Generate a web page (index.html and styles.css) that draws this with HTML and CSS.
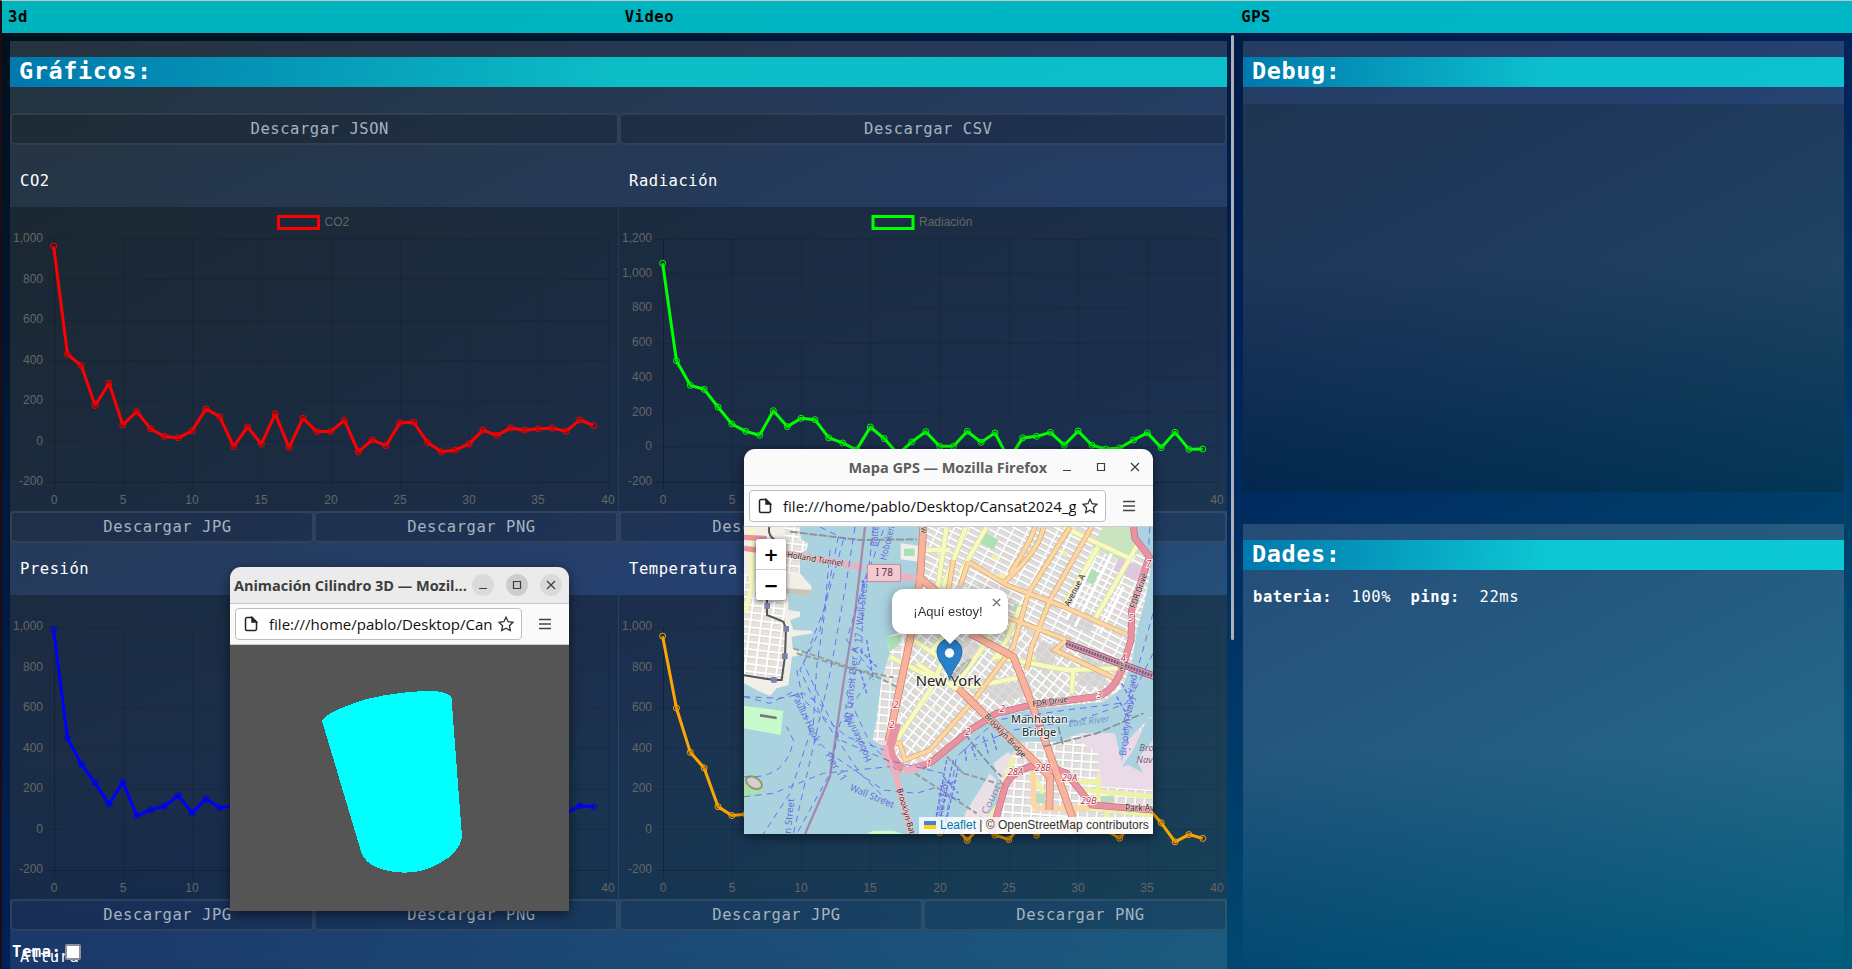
FILE: index.html
```html
<!DOCTYPE html>
<html lang="es">
<head>
<meta charset="utf-8">
<title>Cansat 2024</title>
<link rel="stylesheet" href="styles.css">
</head>
<body>
<div class="app">
  <nav class="nav"><b>3d</b><b>Video</b><b>GPS</b></nav>
  <div class="columns">
    <div class="graphs-scroll">
      <section class="panel graphs">
        <h2 class="bar">Gráficos:</h2>
        <div class="buttons export"><button>Descargar JSON</button><button>Descargar CSV</button></div>
        <div class="charts">
          <article><h3>CO2</h3><svg class="chart" id="co2"></svg><div class="buttons"><button>Descargar JPG</button><button>Descargar PNG</button></div></article>
          <article><h3>Radiación</h3><svg class="chart" id="rad"></svg><div class="buttons"><button>Descargar JPG</button><button>Descargar PNG</button></div></article>
          <article><h3>Presión</h3><svg class="chart" id="pre"></svg><div class="buttons"><button>Descargar JPG</button><button>Descargar PNG</button></div></article>
          <article><h3>Temperatura</h3><svg class="chart" id="tem"></svg><div class="buttons"><button>Descargar JPG</button><button>Descargar PNG</button></div></article>
          <article><h3>Altura</h3></article>
        </div>
      </section>
      <div class="thumb"></div>
    </div>
    <div class="side">
      <section class="panel fade"><h2 class="bar">Debug:</h2><div class="log"></div></section>
      <section class="panel fade"><h2 class="bar">Dades:</h2><p class="stats"><b>bateria:</b><span>100%</span><b>ping:</b><span>22ms</span></p></section>
    </div>
  </div>
  <label class="theme"><b>Tema:</b><i class="check"></i></label>
</div>

<div class="window cylinder">
  <header class="titlebar">
    <span class="wtitle">Animación Cilindro 3D — Mozil...</span>
    <svg class="wbtn" viewBox="0 0 22 22"><circle cx="11" cy="11" r="11"/><path d="M7 14.5h8"/></svg>
    <svg class="wbtn dark" viewBox="0 0 22 22"><circle cx="11" cy="11" r="11"/><path d="M7.5 7.5h7v7h-7z"/></svg>
    <svg class="wbtn" viewBox="0 0 22 22"><circle cx="11" cy="11" r="11"/><path d="M7 7l8 8M15 7l-8 8"/></svg>
  </header>
  <div class="toolbar">
    <div class="url">
      <svg class="doc" viewBox="0 0 14 16"><path d="M1.5 3a1.5 1.5 0 0 1 1.500-1.500H8L12.500 6v7a1.500 1.500 0 0 1-1.500 1.500H3A1.500 1.500 0 0 1 1.500 13z"/><path class="fold" d="M8 1.500V6h4.500z"/></svg>
      <span>file:///home/pablo/Desktop/Cansat2024_graph</span>
      <svg class="star" viewBox="0 0 16 16"><path d="M8 1.200l2.100 4.500 4.900.6-3.600 3.400.9 4.900L8 12.200l-4.300 2.400.9-4.900L1 6.300l4.900-.6z"/></svg>
    </div>
    <svg class="menu" viewBox="0 0 12 12"><path d="M0 1.500h12M0 6h12M0 10.500h12"/></svg>
  </div>
  <svg class="scene" viewBox="230 645 339 266" shape-rendering="crispEdges"><path d="M322 721C326 713 345 706 367 699C390 693 415 691 432 691Q450 692 451.500 698L462 837C461 846 452 857 440 863C425 872 410 873 402 872.500C385 872 366 866 361.500 853Z" fill="#0ff"/></svg>
</div>

<div class="window map">
  <header class="titlebar">
    <span class="wtitle">Mapa GPS — Mozilla Firefox</span>
    <svg class="wbtn" viewBox="0 0 22 22"><path d="M7 14.500h8"/></svg>
    <svg class="wbtn" viewBox="0 0 22 22"><path d="M7.500 7.500h7v7h-7z"/></svg>
    <svg class="wbtn" viewBox="0 0 22 22"><path d="M7 7l8 8M15 7l-8 8"/></svg>
  </header>
  <div class="toolbar">
    <div class="url">
      <svg class="doc" viewBox="0 0 14 16"><path d="M1.500 3a1.500 1.500 0 0 1 1.500-1.500H8L12.500 6v7a1.500 1.500 0 0 1-1.500 1.500H3A1.500 1.500 0 0 1 1.500 13z"/><path class="fold" d="M8 1.500V6h4.500z"/></svg>
      <span>file:///home/pablo/Desktop/Cansat2024_graph</span>
      <svg class="star" viewBox="0 0 16 16"><path d="M8 1.200l2.100 4.500 4.900.6-3.600 3.400.9 4.900L8 12.200l-4.300 2.400.9-4.900L1 6.300l4.900-.6z"/></svg>
    </div>
    <svg class="menu" viewBox="0 0 12 12"><path d="M0 1.500h12M0 6h12M0 10.500h12"/></svg>
  </div>
  <div class="mapview">
    <svg class="tiles" viewBox="42 261 1227 921" preserveAspectRatio="none">
      <defs>
        <pattern id="gridA" width="40" height="19" patternUnits="userSpaceOnUse" patternTransform="rotate(27)"><rect width="40" height="19" fill="#dedddb"/><path d="M0 0H40M0 0V19" stroke="#cbc9c7" stroke-width="9"/><path d="M0 0H40M0 0V19M0 19H40M40 0V19" stroke="#fff" stroke-width="5"/></pattern>
        <pattern id="gridB" width="22" height="27" patternUnits="userSpaceOnUse" patternTransform="rotate(-52)"><rect width="22" height="27" fill="#dcdad6"/><path d="M0 0H22M0 0V27" stroke="#cbc9c7" stroke-width="8"/><path d="M0 0H22M0 0V27M0 27H22M22 0V27" stroke="#fff" stroke-width="5"/></pattern>
        <pattern id="gridC" width="32" height="22" patternUnits="userSpaceOnUse" patternTransform="rotate(7)"><rect width="32" height="22" fill="#e6e2dc"/><path d="M0 0H32M0 0V22" stroke="#c8c6c4" stroke-width="8"/><path d="M0 0H32M0 0V22M0 22H32M32 0V22" stroke="#fff" stroke-width="6"/></pattern>
        <pattern id="gridD" width="28" height="24" patternUnits="userSpaceOnUse" patternTransform="rotate(4)"><rect width="28" height="24" fill="#dfdedc"/><path d="M0 0H28M0 0V24" stroke="#c8c6c4" stroke-width="8"/><path d="M0 0H28M0 0V24M0 24H28M28 0V24" stroke="#fff" stroke-width="5"/></pattern>
        <clipPath id="manhattan"><path id="mshape" d="M582 261L572 330 562 440 545 560 470 592 480 640 455 720 440 840 428 900 465 920 480 965 515 995 545 995 610 972 660 930 745 862 830 822 930 805 1050 792 1120 785 1175 745 1205 670 1220 570 1245 480 1262 390 1245 330 1215 295 1205 261Z"/></clipPath>
        <clipPath id="brooklyn"><path d="M735 1182L800 1090 825 970 870 905 985 905 1050 880 1155 880 1175 970 1195 900 1262 830 1269 840V1182Z"/></clipPath>
      </defs>
      <rect x="42" y="261" width="1227" height="921" fill="#aad3df"/>
      <!-- New Jersey -->
      <path d="M42 261H205L215 300 235 310 230 330 210 340V400L245 440 240 465 175 460V510L210 515V530L180 540 190 570 245 572 248 580 185 590 188 625 215 635 212 645 186 650 175 735 140 745 120 768 90 755 42 730Z" fill="#f2efe9"/>
      <path d="M42 400L165 480 165 715 120 725 42 705Z" fill="url(#gridC)"/>
      <path d="M165 261H210L205 300 235 310 210 345 208 400 165 400Z" fill="url(#gridC)"/>
      <path d="M170 445L245 450 240 467 168 460Z" fill="#c9c4b8"/>
      <path d="M42 798L160 812 152 885 42 865Z" fill="#c8facc"/><path d="M90 826L140 834" stroke="#777" stroke-width="8"/>
      <path d="M42 1010L65 995 105 1030 90 1065 65 1060 42 1090Z" fill="#a8e0a8"/><ellipse cx="72" cy="1028" rx="26" ry="16" transform="rotate(30 72 1028)" fill="#d5d0ca" stroke="#8d9488" stroke-width="6"/>
      <path d="M410 1182L430 1172H490L520 1182Z" fill="#c8facc"/>
      <path d="M65 261V440L45 520" fill="none" stroke="#f6f8b8" stroke-width="14"/><path d="M42 292L110 296M42 325L80 330" stroke="#e892a2" stroke-width="16"/>
      <path d="M118 261Q112 285 135 300M111 470V525L160 545 168 567 165 648 155 720 132 720 42 706" fill="none" stroke="#555" stroke-width="6"/>
      <path d="M103 489h17v17h-17zM160 558h17v17h-17zM156 640h17v17h-17zM123 711h17v17h-17z" fill="#7881b0"/>
      <!-- Manhattan -->
      <use href="#mshape" fill="#f2efe9"/>
      <path d="M512 310L570 318 565 365 512 358Z" fill="#f2efe9"/><path d="M522 326h32v22h-32z" fill="#a9e0b8"/>
      <g clip-path="url(#manhattan)">
        <path d="M585 261H1269V700L1180 780 860 700 560 600Z" fill="url(#gridA)"/>
        <path d="M545 570L860 560 1180 690 1160 790 780 830 540 1000 490 960 520 740Z" fill="url(#gridB)"/>
        <path d="M440 620L540 590 495 930 430 900Z" fill="url(#gridD)"/>
        <path d="M1120 261H1240L1225 340 1185 370 1085 320Z" fill="#c9e4c0"/><path d="M1165 355L1235 380 1225 425 1150 390Z" fill="#ddc9dd"/>
        <path d="M760 275L805 300 790 330 745 305ZM1080 385L1105 400 1090 435 1062 418ZM855 490l25 12-8 20-25-12zM465 592l50-8-8 30-40 30z" fill="#aee0b6"/>
        <path d="M930 600L985 620 960 700 900 680ZM1055 640L1140 680 1120 745 1040 735ZM1030 500L1100 530 1080 580 1010 550ZM760 740L900 720 905 765 800 790ZM690 600L760 620 740 670 690 660Z" fill="#d3cfd0" opacity=".75"/>
        <path d="M790 340l18 8-7 14-18-8zM810 395l25 12-8 20-25-12zM1000 330l15 7-6 13-15-7zM905 640l15 8-6 14-15-8zM760 470h14v12h-14zM605 800h12v10h-12z" fill="#f0efb0"/>
        <path d="M1145 340L1035 560M1105 330L1010 540M1180 440L1110 580" fill="none" stroke="#fff" stroke-width="9"/>
        <g id="yellow"><path d="M650 261L622 450M708 261L640 440M770 261L690 400M1000 261L1205 358M1225 310L1090 545M1105 320L1000 500M575 330H660M870 500L830 600 790 660M800 650L1010 690 1165 685M480 650L620 720 730 740 880 710M550 600L640 660 600 750 500 900M640 590L600 640M780 590L690 720M1030 690L1025 760M560 670L700 760" fill="none" stroke="#d6d896" stroke-width="17"/>
        <path d="M650 261L622 450M708 261L640 440M770 261L690 400M1000 261L1205 358M1225 310L1090 545M1105 320L1000 500M575 330H660M870 500L830 600 790 660M800 650L1010 690 1165 685M480 650L620 720 730 740 880 710M550 600L640 660 600 750 500 900M640 590L600 640M780 590L690 720M1030 690L1025 760M560 670L700 760" fill="none" stroke="#f6fabf" stroke-width="13"/></g>
        <path d="M715 365L830 435 1000 500 1190 583M670 360L655 450M715 365L690 440M940 261Q930 330 820 430M915 261Q900 310 840 400M1020 261L895 460 850 620 740 770 600 930 525 960 510 910 470 908M1085 261L960 480 905 620 890 690M840 535L1010 600 975 630 1155 715" fill="none" stroke="#d7a668" stroke-width="16"/>
        <path d="M715 365L830 435 1000 500 1190 583M670 360L655 450M715 365L690 440M940 261Q930 330 820 430M915 261Q900 310 840 400M1020 261L895 460 850 620 740 770 600 930 525 960 510 910 470 908M1085 261L960 480 905 620 890 690M840 535L1010 600 975 630 1155 715" fill="none" stroke="#fcd6a4" stroke-width="12"/>
      </g>
      <!-- Brooklyn -->
      <g clip-path="url(#brooklyn)">
        <rect x="700" y="800" width="569" height="382" fill="url(#gridD)"/>
        <path d="M1050 870H1269V1050L1110 1040 1105 940 1050 905Z" fill="#ebdbe8"/><path d="M1175 980L1210 930 1250 840 1269 830V900L1220 960 1240 1000 1195 975Z" fill="#aad3df"/>
        <path d="M1105 1070l45-5v40h-40zM905 1060h40v30h-40z" fill="#b8dcc0"/>
        <path d="M850 950L820 1040 760 1182M910 1105H1090L1269 1125M1060 1050L1269 1070M1105 1010V1100M1010 1025H1100M1130 1182V1110M900 990L940 1060" stroke="#eef2a8" stroke-width="15" fill="none"/>
        <path d="M910 980V1090L920 1105H1080M1000 1182L1040 1100" stroke="#fcd6a4" stroke-width="17" fill="none"/>
      </g>
      <path d="M790 970L835 935 845 950 810 1030ZM705 1120L780 1000 800 1020 760 1182H700Z" fill="#ebe0e6"/>
      <g fill="none" stroke="#c96b80" stroke-width="21"><path d="M575 980L605 965 720 870 800 820 905 795 1100 770Q1150 755 1175 690L1203 600 1205 510 1235 420 1258 350 1215 295 1210 261"/><path d="M785 1182L825 1040Q840 1000 900 980H960L1010 1000 1085 1095 1269 1110"/></g>
      <g fill="none" stroke="#e892a2" stroke-width="17"><path d="M540 985L605 965 720 870 800 820 905 795 1100 770Q1150 755 1175 690L1203 600 1205 510 1235 420 1258 350 1215 295 1210 261"/><path d="M785 1182L825 1040Q840 1000 900 980H960L1010 1000 1085 1095 1269 1110"/><path d="M1008 610L1269 708" stroke-width="20"/></g>
      <path d="M1008 610L1269 708" stroke="#606592" stroke-width="9" stroke-dasharray="6 3"/><path d="M1008 600L1269 697M1008 621L1269 718" stroke="#713b4e" stroke-width="2"/>
      <path d="M580 261L570 420 540 600 475 905M565 410L640 470M720 580L850 650 905 790 950 915 1045 1182M685 745L770 830 915 965 960 1010 958 1110" stroke="#c87968" stroke-width="23" fill="none"/>
      <path d="M580 261L570 420 540 600 475 905M565 410L640 470M720 580L850 650 905 790 950 915 1045 1182M685 745L770 830 915 965 960 1010 958 1110" stroke="#f9b29c" stroke-width="19" fill="none"/>
      <path d="M500 850L485 905Q470 935 500 970L520 990" stroke="#e892a2" stroke-width="26" fill="none"/>
      <path d="M465 915Q465 965 495 995L520 1090 545 1182M520 992L570 985" stroke="#edb1be" stroke-width="20" fill="none"/>
      <path d="M168 340L400 383M515 410L560 415" stroke="#edb1be" stroke-width="20" stroke-dasharray="38 3"/>
      <!-- ferries and borders -->
      <path d="M405 261L375 520 340 730 300 1010 225 1182" fill="none" stroke="#a48ab0" stroke-width="7"/>
      <path d="M180 275L390 300 560 298" fill="none" stroke="#909698" stroke-width="6" stroke-dasharray="24 5"/>
      <path d="M190 625L440 710 500 740M200 640L360 685 490 712M700 1000L800 1030M555 1000L740 1120M650 950L700 1000" fill="none" stroke="#989d9d" stroke-width="6" stroke-dasharray="18 8"/>
      <path d="M705 880Q760 960 815 1010M940 920L1100 880 1240 820M985 860L1000 920" fill="none" stroke="#858d98" stroke-width="5" stroke-dasharray="24 7"/>
      <g fill="none" stroke="#6d70f2" stroke-width="3" stroke-dasharray="19 15"><path d="M375 261L350 420 300 700 190 1182M340 300L290 480 260 680 250 850 180 1060 100 1182M325 290L270 570 210 690 270 820 390 1000 490 1100M300 330L285 500 220 670 330 900 470 960 640 1000M410 400L350 600 430 700 330 850 300 1000 200 1182M400 420L395 650 350 760 420 910 500 990M42 770L150 775 220 760 280 800M42 770L120 790 190 755 350 890 460 930M42 1010Q170 1020 190 900L170 860M42 1070L130 1060 280 1000 480 980M200 690L240 880 300 940 460 1050 560 1060 690 1020M270 261L350 300M1260 261L1255 330M1170 790L1010 810 800 840 680 950 640 1182M1269 520L1225 680 1190 790 1050 840 850 870 700 930M1269 640L1210 760 1180 850 1200 930M430 261L415 400M460 270L400 440"/></g>
      <g stroke="#6d70f2" stroke-width="4" stroke-dasharray="13 7"><path d="M650 960L615 1150M670 960L630 1140M685 980L640 1182M625 1060L690 1080M640 1010L685 1060M390 630L440 680M410 600L430 720M390 690L410 760M760 890L775 940M785 880L800 930M705 930L710 970M725 920L740 960M1160 770L1200 840M1175 730L1215 800"/></g>
      <!-- labels -->
      <g font-family="Noto Sans, sans-serif" font-size="29" fill="#6b6edb" lengthAdjust="spacingAndGlyphs">
        <text transform="translate(362 850) rotate(-84)" textLength="230" lengthAdjust="spacingAndGlyphs">NJ Transit Pier A</text><text transform="translate(393 610) rotate(-84)" textLength="190" lengthAdjust="spacingAndGlyphs">17 / Wall Street</text>
        <text transform="translate(440 320) rotate(-84)" textLength="62" lengthAdjust="spacingAndGlyphs">Batte</text><text transform="translate(468 362) rotate(-76)" textLength="105" lengthAdjust="spacingAndGlyphs">Hoboken</text>
        <text transform="translate(185 765) rotate(64)" textLength="175" lengthAdjust="spacingAndGlyphs">Paulus Hook -</text><text transform="translate(285 945) rotate(58)">Pier 11</text>
        <text transform="translate(358 1050) rotate(23)" textLength="140" lengthAdjust="spacingAndGlyphs">Wall Street</text><text transform="translate(425 960) rotate(-115)" textLength="150" lengthAdjust="spacingAndGlyphs">Hoboken/NJ</text>
        <text transform="translate(182 1182) rotate(-84)">n Street</text><text transform="translate(1187 948) rotate(-82)" textLength="245" lengthAdjust="spacingAndGlyphs">Brooklyn Navy Yard</text>
        <text transform="translate(638 1130) rotate(-80)" textLength="110" lengthAdjust="spacingAndGlyphs">Pier 6 Ferry</text>
      </g>
      <g font-family="Noto Sans, sans-serif" font-size="25" fill="#222" stroke="#f5dedd" stroke-width="3" paint-order="stroke">
        <text transform="translate(170 352) rotate(9)" textLength="170" lengthAdjust="spacingAndGlyphs">Holland Tunnel</text><text transform="translate(1017 500) rotate(-62)" textLength="104" lengthAdjust="spacingAndGlyphs">Avenue A</text><text transform="translate(1215 506) rotate(-70)" textLength="108" lengthAdjust="spacingAndGlyphs">FDR Drive</text><text transform="translate(908 801) rotate(-8)" textLength="108" lengthAdjust="spacingAndGlyphs">FDR Drive</text>
        <text transform="translate(762 830) rotate(47)" textLength="170" lengthAdjust="spacingAndGlyphs">Brooklyn Bridge</text><text transform="translate(500 1048) rotate(74)" textLength="185" lengthAdjust="spacingAndGlyphs">Brooklyn-Battery</text><text x="1185" y="1113">Park Ave</text><text transform="translate(573 262) rotate(86)" font-size="20">W</text><text transform="translate(1178 694) rotate(-80)" font-size="19">ive</text>
      </g>
      <g font-family="Noto Sans, sans-serif" font-size="28" font-style="italic" fill="#b32e4b" stroke="#fff" stroke-width="5" paint-order="stroke">
        <text x="490" y="803">2</text><text x="478" y="864">2</text><text x="588" y="980">1</text><text x="706" y="884">2</text><text x="809" y="817">2</text><text x="1100" y="775">3</text><text x="1172" y="663">4</text><text x="1195" y="542">5</text><text x="1249" y="381">7</text>
        <text x="833" y="1005">28A</text><text x="915" y="994">28B</text><text x="995" y="1022">29A</text><text x="1052" y="1091">29B</text>
      </g>
      <rect x="412" y="373" width="100" height="52" rx="5" fill="#efcbd1" stroke="#ce8395" stroke-width="3"/><text x="437" y="409" font-family="Noto Sans, sans-serif" font-size="31" textLength="52" lengthAdjust="spacingAndGlyphs" fill="#6b2d42">I 78</text>
      <g font-family="Noto Sans, sans-serif" fill="#222" stroke="#fff" stroke-opacity=".75" stroke-width="6" paint-order="stroke"><text x="557" y="737" font-size="41" textLength="197" lengthAdjust="spacingAndGlyphs">New York</text><text x="843" y="848" font-size="32" textLength="170" lengthAdjust="spacingAndGlyphs">Manhattan</text><text x="876" y="888" font-size="32" textLength="103" lengthAdjust="spacingAndGlyphs">Bridge</text></g>
      <g font-family="Noto Sans, sans-serif" font-size="28" font-style="italic"><text transform="translate(1016 860) rotate(-7)" fill="#6d9ccc" textLength="124" lengthAdjust="spacingAndGlyphs">East River</text><text x="1228" y="933" fill="#755e80">Bro</text><text x="1219" y="969" fill="#755e80">Nav</text><text transform="translate(742 1180) rotate(-63)" font-style="normal" fill="#a184ae" textLength="175" lengthAdjust="spacingAndGlyphs">ork County</text></g>
      <ellipse cx="690" cy="690" rx="48" ry="10" transform="rotate(-45 690 690)" fill="#555" opacity=".28"/>
      <path d="M659 718C648 681 621 665 621 634A37.500 37.500 0 0 1 696 634C696 665 669 681 659 718Z" fill="#2a81cb" stroke="#1f6ba8" stroke-width="3"/><circle cx="658.500" cy="639" r="14" fill="#fff"/>
    </svg>
    <div class="zoomctl"><b>+</b><b>−</b></div>
    <div class="popup">¡Aquí estoy!<svg viewBox="0 0 10 10"><path d="M1 1l8 8M9 1l-8 8"/></svg></div>
    <div class="attrib"><i class="flag"></i><a>Leaflet</a> | © OpenStreetMap contributors</div>
  </div>
</div>
<script src="charts.js"></script>
</body>
</html>
```

FILE: styles.css
```css
* { box-sizing: border-box; }
body { margin: 0; width: 1852px; height: 969px; overflow: hidden; position: relative; color: #fff; font-family: "DejaVu Sans Mono", monospace; font-size: 15.5px; letter-spacing: .55px; background: linear-gradient(to bottom right, #00101a, #002058 50%, #005c7c); }
.app { height: 969px; overflow: hidden; border-top: 1px solid #c4c4c4; border-left: 2px solid #1c0d14; display: flex; flex-direction: column; }
.nav { height: 32px; flex: none; display: grid; grid-template-columns: repeat(3, 1fr); align-items: center; background: rgba(0,204,214,.87); color: #000; }
.nav b { padding-left: 6px; }
.columns { flex: 1; min-height: 0; display: flex; padding: 8px 8px 0; gap: 9px; }
.graphs-scroll { width: 1224px; flex: none; display: flex; justify-content: space-between; }
.thumb { width: 3px; height: 605px; margin-top: -6px; border-radius: 2px; background: #b0b0b4; }
.panel { background: linear-gradient(rgba(255,255,255,.145) 50%, rgba(255,255,255,0)); padding-top: 16px; }
.graphs { width: 1217px; height: 1444px; }
.bar { margin: 0; height: 30px; line-height: 29px; padding-left: 9px; font-size: 23.5px; letter-spacing: .6px; background: linear-gradient(90deg, #0078ad, rgba(2,246,248,.7) 50%); }
.side { flex: 1; display: flex; flex-direction: column; gap: 32px; }
.fade { height: 451px; flex: none; }
.log { margin-top: 17px; height: 388px; background: rgba(15,30,20,.23); border-radius: 4px 0 0 0; }
.stats { margin: 17px 10px; line-height: 20px; display: flex; }
.stats span { margin: 0 19.5px; }
.buttons { display: flex; height: 32px; }
.buttons button { flex: 1 1 0; min-width: 0; border: 2px solid rgba(70,75,80,.4); border-radius: 5px; background: rgba(10,10,20,.22); background-clip: padding-box; color: #a7b2be; font: inherit; letter-spacing: inherit; padding: 0 0 0 11px; line-height: 22px; }
.export { margin: 26px 0 10px; }
.charts { display: grid; grid-template-columns: 608px 608px; column-gap: 1px; }
h3 { margin: 0; height: 52px; line-height: 53px; padding-left: 10px; font-weight: 400; font-size: inherit; }
.chart { display: block; width: 608px; height: 304px; background: rgba(8,14,12,.34); font: 12px "Liberation Sans", Arial, sans-serif; letter-spacing: 0; }
.chart text { fill: #666; }
.theme { position: absolute; left: 12px; top: 943px; display: flex; align-items: center; gap: 4px; }
.check { width: 16px; height: 16px; background: #fff; border: 2px solid #8f8f9d; border-radius: 2px; }
.window { position: absolute; display: flex; flex-direction: column; border-radius: 11px 11px 0 0; overflow: hidden; box-shadow: 0 3px 12px rgba(0,0,0,.55); font-family: "Open Sans", "Noto Sans", sans-serif; color: #111; letter-spacing: 0; }
.cylinder { left: 230px; top: 567px; width: 339px; height: 344px; }
.map { left: 744px; top: 449px; width: 409px; height: 385px; }
.titlebar { height: 37px; flex: none; display: flex; align-items: center; gap: 12px; padding: 0 7px 0 4px; background: #ebebeb; border-bottom: 1px solid #c8c8c8; color: #3d3d3d; }
.map .titlebar { background: #fafafa; color: #5e5e5e; }
.wtitle { font: bold 14.5px "Open Sans", sans-serif; letter-spacing: -.03px; flex: 1; white-space: nowrap; margin-right: -8px; }
.map .wtitle { text-align: right; margin-right: -3px; letter-spacing: -.05px; }
.wbtn { width: 22px; height: 22px; flex: none; stroke: #3d3d3d; fill: none; stroke-width: 1.2; }
.wbtn circle { fill: #dadada; stroke: none; }
.wbtn.dark circle { fill: #cdcdcd; }
.toolbar { height: 41px; flex: none; display: flex; align-items: center; padding: 0 18px 0 5px; background: #fafafa; border-bottom: 1px solid #ccc; }
.url { width: 287px; height: 32px; border: 1px solid #bdbdc0; border-radius: 4px; background: #fff; display: flex; align-items: center; padding: 0 7px 0 8px; }
.map .url { width: 357px; }
.url span { flex: 1; overflow: hidden; white-space: nowrap; margin: 0 6px 0 11px; font-size: 15.05px; }
.doc { width: 14px; height: 16px; fill: none; stroke: #222; stroke-width: 1.5; }
.fold { fill: #222; }
.star { width: 16px; height: 16px; fill: none; stroke: #333; stroke-width: 1.3; }
.menu { width: 12px; height: 12px; margin-left: auto; stroke: #444; stroke-width: 1.3; }
.scene { flex: 1; background: #555; display: block; }
.mapview { position: relative; flex: 1; min-height: 0; }
.tiles { display: block; width: 409px; height: 307px; }
.zoomctl { position: absolute; left: 12px; top: 12px; width: 30px; height: 61px; background: #fff; border-radius: 2px; box-shadow: 0 1px 5px rgba(0,0,0,.65); color: #000; font: bold 21px/32px "DejaVu Sans", sans-serif; text-align: center; }
.zoomctl b { display: block; height: 30px; font-size: 18px; }
.zoomctl b + b { border-top: 1px solid #ccc; height: 31px; }
.popup { position: absolute; left: 148px; top: 62px; width: 116px; height: 45px; border-radius: 12px; background: #fff; color: #333; font: 13px/45px "Liberation Sans", Arial, sans-serif; text-align: center; padding-right: 4px; filter: drop-shadow(0 3px 6px rgba(0,0,0,.4)); }
.popup::after { content: ""; position: absolute; left: 47px; top: 44px; border: 11px solid transparent; border-top-color: #fff; border-bottom: 0; }
.popup svg { position: absolute; right: 7px; top: 9px; width: 9px; height: 9px; stroke: #757575; stroke-width: 1.5; }
.attrib { position: absolute; right: 0; bottom: 0; width: 234px; height: 17px; padding: 0 5px; background: rgba(255,255,255,.8); color: #333; font: 12px/17px "Liberation Sans", Arial, sans-serif; white-space: nowrap; letter-spacing: 0; }
.attrib a { color: #0078a8; }
.flag { display: inline-block; width: 12px; height: 8px; margin-right: 4px; background: linear-gradient(#4c7be1 50%, #ffd500 50%); }
```

FILE: charts.js
```javascript
const series = [
  { id: "co2", color: "#f00", max: 1000, label: "CO2", legendX: 268.5, data: [966,431,375,178,288,82,148,63,25,18,53,161,122,-25,72,-13,137,-30,115,49,49,105,-51,8,-20,92,95,-5,-51,-43,-12,56,30,67,56,63,66,51,107,79] },
  { id: "rad", color: "#0f0", max: 1200, label: "Radiación", legendX: 254, data: [1060,499,357,334,232,134,92,69,211,119,167,159,54,25,-15,117,50,-40,31,90,6,6,92,29,83,-70,54,63,86,12,94,12,-10,-4,42,83,-2,86,-12,-10] },
  { id: "pre", color: "#00f", max: 1000, data: [988,452,324,229,125,235,69,97,115,168,82,151,107,118,90,60,100,80,70,110,90,60,80,100,110,70,90,60,80,100,70,90,110,80,60,90,100,82,117,112] },
  { id: "tem", color: "orange", max: 1000, data: [955,600,381,304,113,69,75,60,90,40,70,20,50,30,60,10,40,0,30,10,-16,20,-53,20,-28,-49,30,-28,20,10,30,0,-5,-43,40,110,33,-61,-25,-44] }
];
const left = 43.6, right = 597.6, top0 = 32, bottom = 275;
for (const s of series) {
  const x = v => left + v * (right - left) / 40;
  const y = v => bottom - (v + 200) * (bottom - top0) / (s.max + 200);
  let out = "";
  for (let v = -200; v <= s.max; v += 200) {
    const gy = Math.floor(y(v)) + .5;
    out += `<path d="M${left - 7} ${gy}H${right}" stroke="rgba(0,0,0,${v === -200 ? .2 : .1})"/><text x="33" y="${y(v) + 3}" text-anchor="end">${v.toLocaleString("en-US")}</text>`;
  }
  for (let v = 0; v <= 40; v += 5) {
    const gx = Math.round(x(v)) + .5;
    out += `<path d="M${gx} ${top0}V${bottom + 8}" stroke="rgba(0,0,0,${v ? .1 : .25})"/><text x="${gx - .5}" y="297" text-anchor="middle">${v}</text>`;
  }
  if (s.label) out += `<rect x="${s.legendX}" y="9.5" width="40" height="12" fill="none" stroke="${s.color}" stroke-width="3"/><text x="${s.legendX + 46}" y="19">${s.label}</text>`;
  out += `<polyline fill="none" stroke="${s.color}" stroke-width="3" stroke-linejoin="round" points="${s.data.map((v, i) => x(i) + "," + y(v)).join(" ")}"/>`;
  out += s.data.map((v, i) => `<circle cx="${x(i)}" cy="${y(v)}" r="3" fill="rgba(0,0,0,.1)" stroke="${s.color}"/>`).join("");
  document.getElementById(s.id).innerHTML = out;
}
```
